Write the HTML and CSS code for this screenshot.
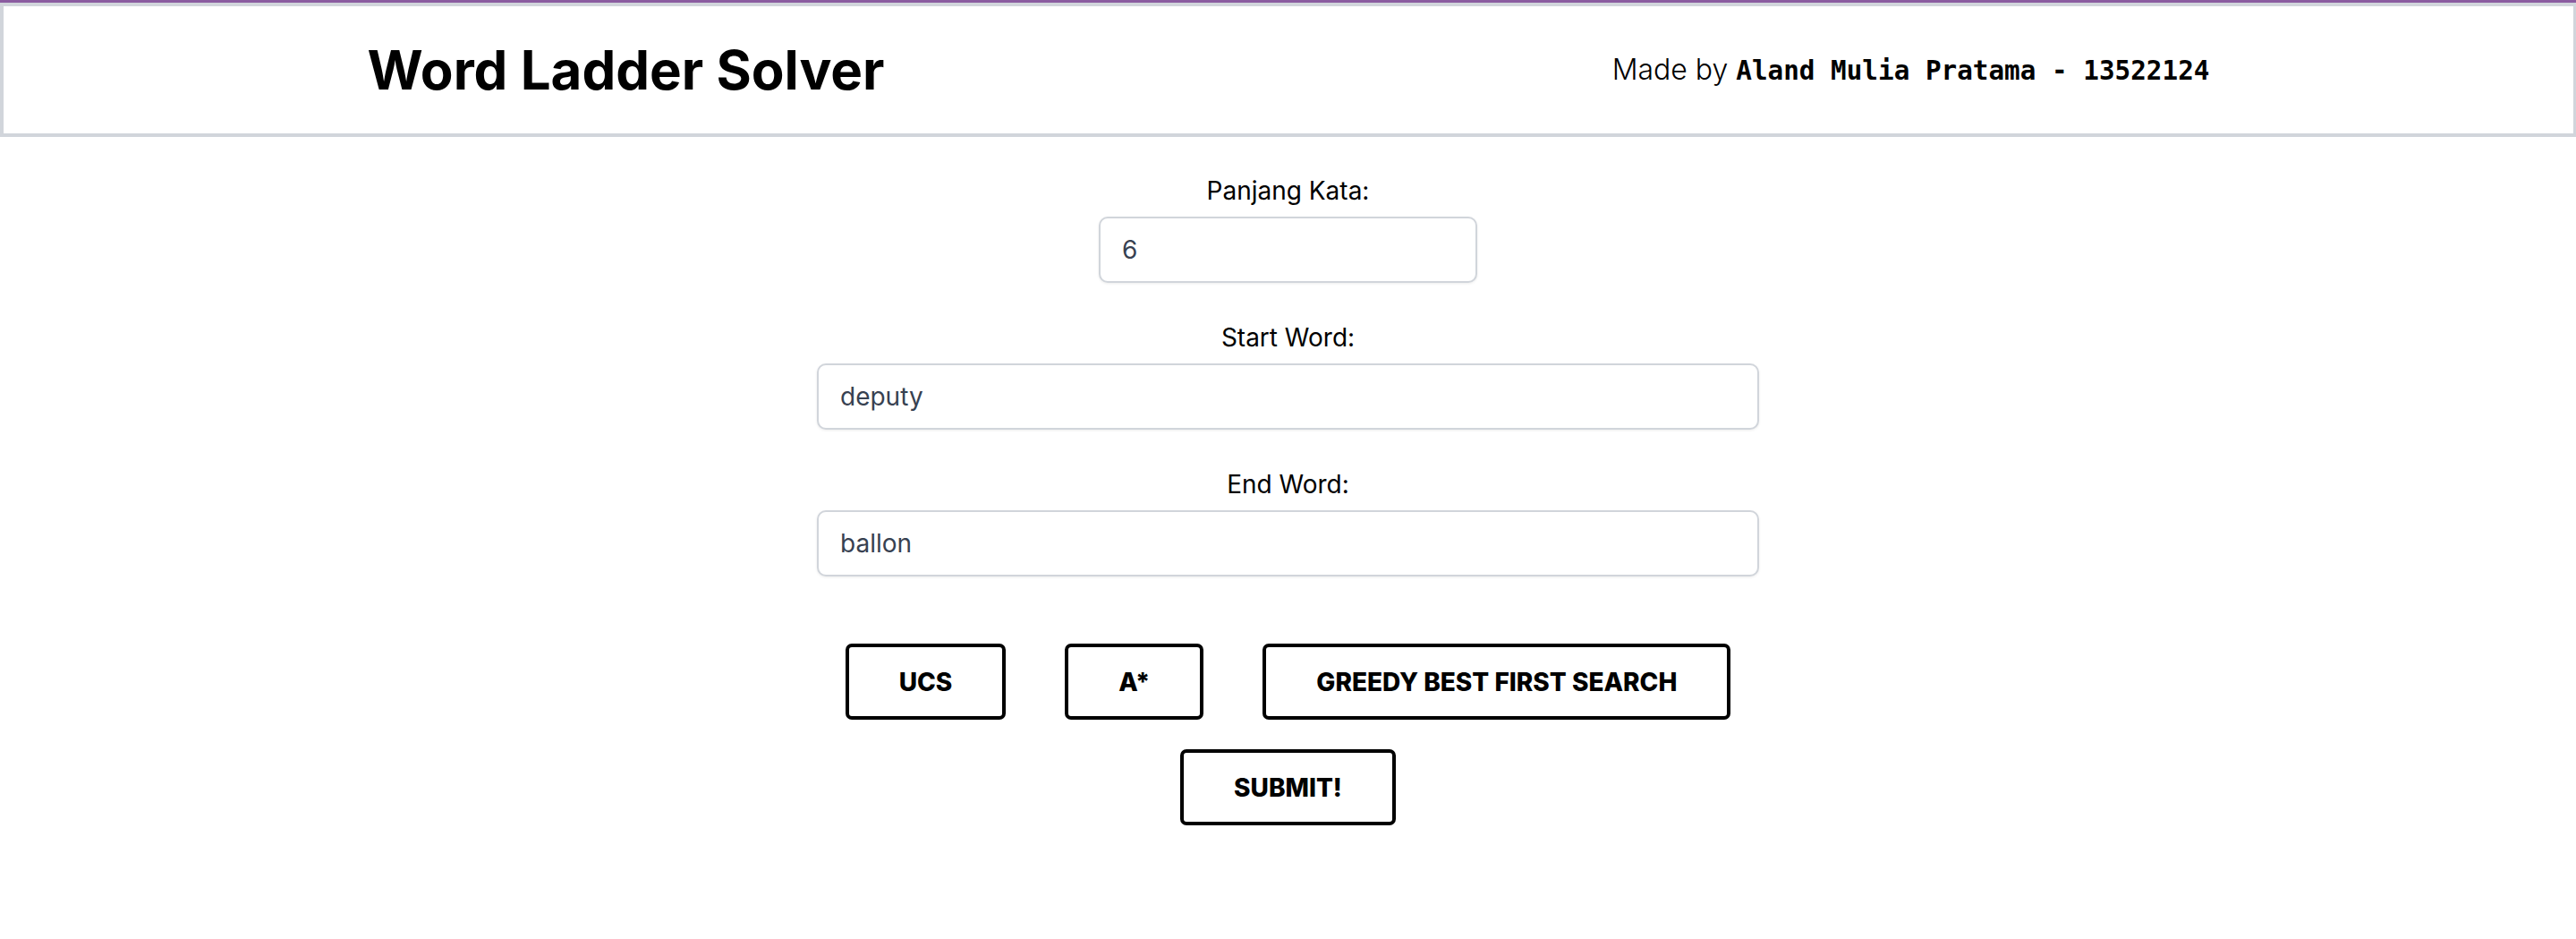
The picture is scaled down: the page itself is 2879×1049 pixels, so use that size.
FILE: index.html
```html
<!DOCTYPE html>
<html lang="en">
<head>
<meta charset="utf-8">
<title>Word Ladder Solver</title>
<link rel="stylesheet" href="styles.css">
</head>
<body>
  <div class="topbar"></div>
  <header class="header">
    <h1 class="title">Word Ladder Solver</h1>
    <p class="credit">Made by <span class="mono">Aland Mulia Pratama - 13522124</span></p>
  </header>
  <main class="main">
    <div class="field">
      <label class="label" for="len">Panjang Kata:</label>
      <input class="input input-short" id="len" type="text" value="6">
    </div>
    <div class="field">
      <label class="label" for="start">Start Word:</label>
      <input class="input input-wide" id="start" type="text" value="deputy">
    </div>
    <div class="field">
      <label class="label" for="end">End Word:</label>
      <input class="input input-wide" id="end" type="text" value="ballon">
    </div>
    <div class="algos">
      <button class="btn" type="button">UCS</button>
      <button class="btn" type="button">A*</button>
      <button class="btn" type="button">GREEDY BEST FIRST SEARCH</button>
    </div>
    <div class="submit-row">
      <button class="btn" type="submit">SUBMIT!</button>
    </div>
  </main>
</body>
</html>
```
FILE: styles.css
```css
* {
  box-sizing: border-box;
}

html, body {
  margin: 0;
  padding: 0;
  background: #ffffff;
}

body {
  font-family: Inter, "Noto Sans", "Liberation Sans", sans-serif;
  color: #000000;
}

.topbar {
  height: 3px;
  background: #8b5ca0;
}

.header {
  height: 150px;
  border: 4px solid #d1d5db;
  border-right-width: 3px;
  display: flex;
  justify-content: space-around;
  align-items: center;
}

.title {
  margin: 0;
  font-size: 60px;
  line-height: 72px;
  font-weight: 700;
}

.credit {
  margin: 0;
  font-size: 32px;
  line-height: 36px;
  font-weight: 300;
}

.mono {
  font-family: "DejaVu Sans Mono", "Liberation Mono", monospace;
  font-size: 29.3px;
  font-weight: 700;
}

.main {
  display: flex;
  flex-direction: column;
  align-items: center;
  padding-top: 42px;
}

.field {
  display: flex;
  flex-direction: column;
  align-items: center;
  margin-bottom: 43px;
}

.label {
  font-size: 28px;
  line-height: 36px;
  margin-bottom: 11px;
}

.input {
  height: 74px;
  border: 2px solid #d1d5db;
  border-radius: 10px;
  box-shadow: 0 1px 3px rgba(0, 0, 0, 0.08);
  padding: 0 24px;
  font-family: Inter, "Noto Sans", sans-serif;
  font-size: 28px;
  color: #374151;
  background: #ffffff;
  outline: none;
}

.input-short {
  width: 423px;
}

.input-wide {
  width: 1053px;
}

.algos {
  display: flex;
  gap: 66px;
  margin-top: 32px;
}

.submit-row {
  margin-top: 33px;
  display: flex;
  justify-content: center;
}

.btn {
  height: 85px;
  padding: 0 56px;
  border: 4px solid #000000;
  border-radius: 7px;
  background: #ffffff;
  color: #000000;
  font-family: Inter, "Noto Sans", sans-serif;
  font-size: 28px;
  font-weight: 800;
  cursor: pointer;
}
```
